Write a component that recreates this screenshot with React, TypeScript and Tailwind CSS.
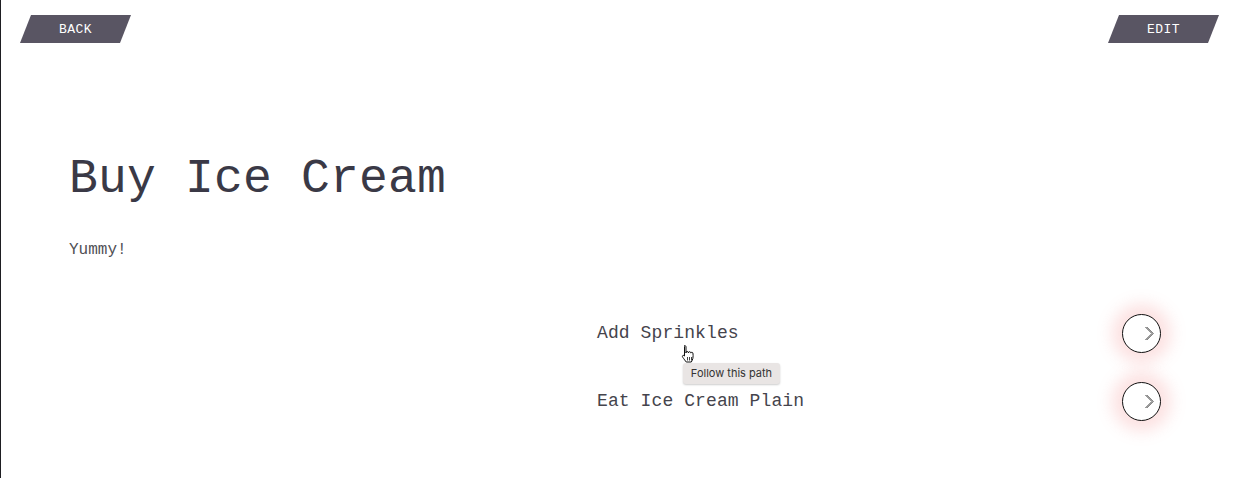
import React from "react";

const mono = "font-['Liberation_Mono','Courier_New',monospace]";

function SlantButton({ label }: { label: string }) {
  return (
    <div className="flex h-[28px] w-[111px] items-center justify-center bg-[#595563] [clip-path:polygon(11px_0,100%_0,calc(100%-11px)_100%,0_100%)]">
      <span className={`${mono} text-[13px] leading-none tracking-[0.5px] text-white`}>{label}</span>
    </div>
  );
}

function Chevron() {
  return (
    <svg className="absolute left-[-1px] top-[-1px]" width="39" height="39" viewBox="0 0 39 39" fill="none">
      <polyline points="23.5,13 30,19.5 23.5,26" stroke="#222" strokeWidth="0.9" />
      <polyline points="25,13 31.5,19.5 25,26" stroke="#555" strokeWidth="0.7" />
    </svg>
  );
}

function PathRow({ label }: { label: string }) {
  return (
    <div className="flex h-[40px] w-[564px] items-center justify-between">
      <span className={`${mono} text-[18px] leading-[40px] tracking-[0.1px] text-[#45444c]`}>{label}</span>
      <div className="relative h-[39px] w-[39px] rounded-full border border-[#111] bg-white shadow-[0_0_16px_10px_rgba(240,120,120,0.22)]">
        <Chevron />
      </div>
    </div>
  );
}

export default function App() {
  return (
    <div className="relative h-[478px] w-full overflow-hidden border-l border-[#1e1e22] bg-white">
      <div className="flex justify-between pl-[19px] pr-[29px] pt-[15px]">
        <SlantButton label="BACK" />
        <SlantButton label="EDIT" />
      </div>
      <div className="pl-[68px]">
        <h1 className={`${mono} mt-[112px] text-[48px] leading-[48px] tracking-[0.2px] text-[#3a3946]`}>Buy Ice Cream</h1>
        <p className={`${mono} mt-[37px] text-[16px] leading-[20px] text-[#505055]`}>Yummy!</p>
        <div className="ml-[528px] mt-[53px] flex flex-col gap-[28px]">
          <PathRow label="Add Sprinkles" />
          <PathRow label="Eat Ice Cream Plain" />
        </div>
      </div>

      <svg className="absolute left-[678px] top-[344px]" width="18" height="20" viewBox="0 0 18 20">
        <path
          d="M5.5 1.5c.9 0 1.5.6 1.5 1.5v6l.1-1c.3-.8 1.8-.8 2.1 0l.2 1 .2-.8c.4-.7 1.7-.7 2 0l.2.9.3-.5c.5-.5 1.6-.4 1.8.4.3 1.3.3 3.5 0 5.3-.3 1.5-1 2.8-1.6 3.7H7.2c-.8-1-2.2-3-3.4-4.6-.6-.8-.5-1.8.3-2 .6-.2 1.1.1 1.4.6V3c0-.9.5-1.5 0-1.5z"
          fill="#fff"
          stroke="#111"
          strokeWidth="1"
          strokeLinejoin="round"
        />
        <path d="M8.5 13v3.5M10.5 13v3.5M12.5 13v3.5" stroke="#111" strokeWidth="0.8" />
      </svg>

      <div className="absolute left-[682px] top-[363px] flex h-[21px] w-[97px] items-center justify-center rounded-[3px] bg-[#e9e5e4] shadow-[0_1px_2px_rgba(0,0,0,0.2)]">
        <span className="font-['Inter','Noto_Sans',sans-serif] text-[11px] leading-none text-[#333]">Follow this path</span>
      </div>
    </div>
  );
}
